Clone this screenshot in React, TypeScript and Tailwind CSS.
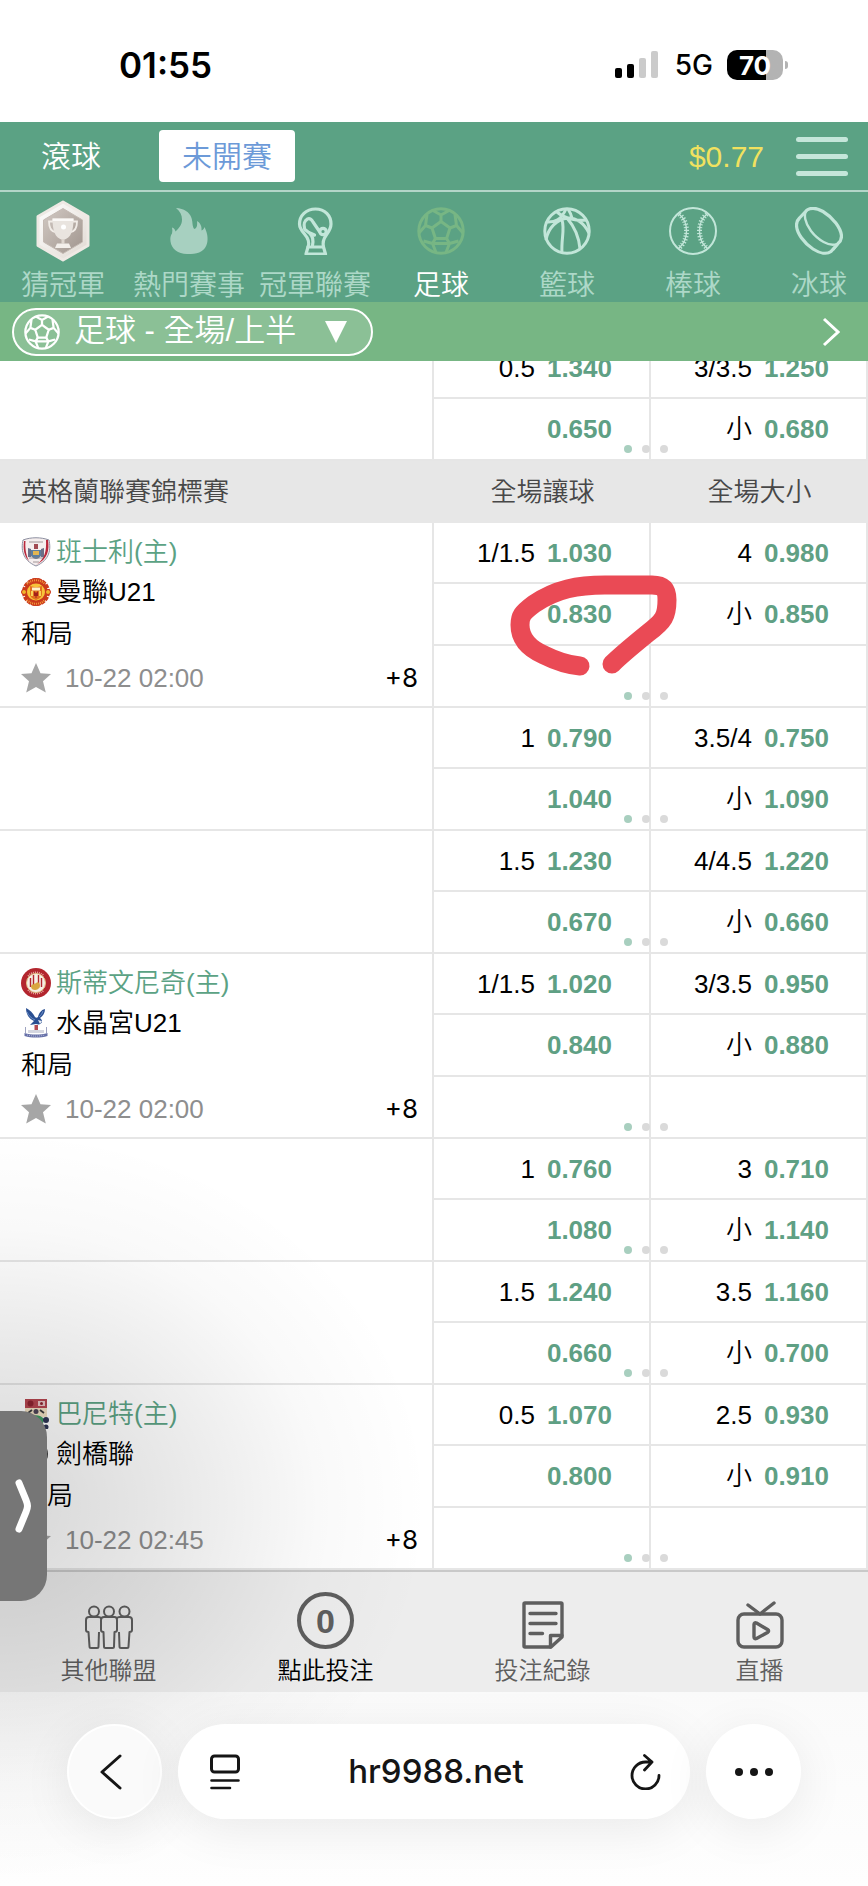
import React from 'react';
import clsx from 'clsx';

type IconProps = { className?: string };

const SoccerIcon: React.FC<IconProps> = ({ className }) => (
  <svg viewBox="0 0 48 48" fill="none" stroke="currentColor" strokeWidth="3" strokeLinejoin="round" className={className}>
    <circle cx="24" cy="24" r="22.2" />
    <path d="M24 14.5 33 21 29.6 31.5H18.4L15 21z" />
    <path d="M24 14.5V8M24 8l-8-4.500M24 8l8-4.500M15 21l-6.500-2.500M8.500 18.500 10 7.500M8.500 18.500 2 26M33 21l6.500-2.500M39.500 18.500 38 7.500M39.500 18.500 46 26M18.400 31.500 15.500 36.500M29.600 31.500l2.900 5M15.500 36.500h17M15.500 36.500 6.500 34M15.500 36.500 19 45.500M32.500 36.500l9-2.500M32.500 36.500 29 45.500" />
  </svg>
);

const ChampionBadge: React.FC<IconProps> = ({ className }) => (
  <svg viewBox="0 0 56 62" className={className}>
    <defs>
      <linearGradient id="badgeRim" x1="0" y1="0" x2="1" y2="1">
        <stop offset="0" stopColor="#ffffff" />
        <stop offset="1" stopColor="#e0d9d2" />
      </linearGradient>
      <linearGradient id="badgeCore" x1="0" y1="0" x2="1" y2="1">
        <stop offset="0" stopColor="#d2c9c3" />
        <stop offset="1" stopColor="#a0958e" />
      </linearGradient>
    </defs>
    <path d="M28 2 53 16.500V45.500L28 60 3 45.500V16.500z" fill="url(#badgeRim)" stroke="#eee9e4" strokeWidth="3" strokeLinejoin="round" />
    <path d="M28 8.500 47.500 20V42L28 53.500 8.500 42V20z" fill="url(#badgeCore)" stroke="#c4bab3" />
    <path d="M18.500 21.500h-4.500c0 6 2 10 6.500 10.500M37.500 21.500H42c0 6-2 10-6.500 10.500" fill="none" stroke="#f1ece7" strokeWidth="1.800" />
    <path d="M17.500 18.500h21c0 11-2 20-10.500 21.500C19.500 38.500 17.500 29.500 17.500 18.500z" fill="#e9e4df" />
    <path d="M17.500 18.500h21v2.500h-21z" fill="#fbf9f7" />
    <path d="M26.500 39h3v4.500h-3z" fill="#ddd5ce" />
    <path d="M22 43.500h12l2 4.500H20z" fill="#f3efeb" />
    <circle cx="28.500" cy="27" r="2.500" fill="#fff" />
  </svg>
);

const FlameIcon: React.FC<IconProps> = ({ className }) => (
  <svg viewBox="0 0 48 48" fill="currentColor" className={className}>
    <path d="M11 1c8 .500 13.500 4 15.500 10 1.500 4.500.500 9 3 11 2.500-1 3-4 2.500-8 3 1.500 5 5 4.500 9.500 1.500-.500 2.500-1.500 3-3.500 2.500 5 4 11 2.500 16.500C40.500 43 34 47 26 47h-4C13 47 6.500 42 5.500 34.500 5 31 5.500 28.500 7 26.500c.500-2 .500-4 0-6 2 .500 3 2 3.500 4C14 21 17 18 17 12.500 17 8 15 4 11 1z" />
  </svg>
);

const WorldCupIcon: React.FC<IconProps> = ({ className }) => (
  <svg viewBox="0 0 48 48" fill="none" stroke="currentColor" strokeWidth="3.2" strokeLinecap="round" strokeLinejoin="round" className={className}>
    <path d="M17 40c2-5 0-9-3.500-13C10 23 8.500 20.500 8.500 17 8.500 8.500 15 2 24.500 2S40 8.500 40 17c0 5-2.500 8-5 11.500-3 4-3.500 7-2.500 11.500" />
    <path d="M17 40h15.500l2 7H15z" />
    <path d="M13.500 21.500c-1-4 0-8 3-9.500 2.500-1 4 .500 5.500 3l6.500 9.500M14 22.500l5 4c3 3 3.500 7 2.500 12M19 26l4.500 2" />
    <circle cx="32" cy="24.500" r="3.2" />
  </svg>
);

const BasketballIcon: React.FC<IconProps> = ({ className }) => (
  <svg viewBox="0 0 48 48" fill="none" stroke="currentColor" strokeWidth="3" className={className}>
    <circle cx="24" cy="24" r="22.2" />
    <path d="M4 15c8 .500 14-2 19-13M14 5c8 7 20 9 29 8M3 33C5 21 14 12 25 11c8-.500 16 5 21 15M19 13c3 9-1 20 0 33M24 11c6 7 12 18 13 31M25 2c2 3 3 5 4 9" />
  </svg>
);

const BaseballIcon: React.FC<IconProps> = ({ className }) => (
  <svg viewBox="0 0 48 48" fill="none" stroke="currentColor" className={className}>
    <circle cx="24" cy="24" r="23" strokeWidth="2" />
    <path d="M10 7c5 4 7.500 10 7.500 17S15 37 10 41M38 7c-5 4-7.500 10-7.500 17S33 37 38 41" strokeWidth="1.400" />
    <path d="M10 7c5 4 7.500 10 7.500 17S15 37 10 41M38 7c-5 4-7.500 10-7.500 17S33 37 38 41" strokeWidth="5" strokeDasharray="1.200 1.800" />
  </svg>
);

const PuckIcon: React.FC<IconProps> = ({ className }) => (
  <svg viewBox="0 0 48 48" fill="none" stroke="currentColor" strokeWidth="3.2" strokeLinejoin="round" className={className}>
    <path d="M12 3c4-2.500 10-2 16 1.500C38 10.500 46 21 46.500 29c0 3-1 5.500-3.500 7.500l-7 8c-4 3-11 2-18-2.500C9 36 1.500 26 1.500 18c0-3 1-5 3-7z" />
    <path d="M12 3c-4 4-2 13 4 21 7 9 18 16 26 13" strokeWidth="2.400" />
    <path d="M38 43l5-6" strokeWidth="2.400" />
  </svg>
);

const StarIcon: React.FC<IconProps> = ({ className }) => (
  <svg viewBox="0 0 30 30" fill="#a6a6a6" className={className}>
    <path d="M15 0l4.500 10.300 10.500.800-8 7.200L24.800 29.500 15 24l-9.800 5.500L8 18.300 0 11.100l10.500-.800z" />
  </svg>
);

const BarnsleyCrest = () => (
  <svg viewBox="0 0 30 30" className="size-[30px] shrink-0">
    <path d="M2 3c8-3 18-3 26 0 2 9 1 20-13 26C1 23 0 12 2 3z" fill="#f5eeee" stroke="#8d8fa0" />
    <path d="M27 3c1.500 10 0 19-12 25 9-6 10.500-14 10-25zM3 4C2 12 3 19 8 24 4.500 17 4 10 4.500 4z" fill="#b8283c" />
    <path d="M7 11l3 1v8H7zM20 12l3-1v9h-3z" fill="#6b6f86" />
    <path d="M10 13h10v6c-2 2-3 3-5 3s-3-1-5-3z" fill="#5d7d9e" />
    <path d="M12 14h6v4h-6z" fill="#e3b552" />
    <path d="M13 7h4v5h-4z" fill="#a24a52" />
    <path d="M8 5h14M8 21h14M12 25h6" stroke="#8a7d80" strokeWidth=".8" />
  </svg>
);

const UnitedCrest = () => (
  <svg viewBox="0 0 30 30" className="size-[30px] shrink-0">
    <ellipse cx="15" cy="15" rx="11.500" ry="14" fill="#cb3a1c" />
    <circle cx="15" cy="15" r="12.500" fill="none" stroke="#cb3a1c" strokeWidth="3" strokeDasharray="4 1" />
    <circle cx="3" cy="15" r="2.500" fill="#f0b52c" stroke="#c9301c" />
    <circle cx="27" cy="15" r="2.500" fill="#f0b52c" stroke="#c9301c" />
    <path d="M6 7c5-5 13-5 18 0M6 23c5 5 13 5 18 0" fill="none" stroke="#f29a3a" strokeWidth="2" strokeDasharray="1 1" />
    <ellipse cx="15" cy="15" rx="9" ry="8.500" fill="#f7c33a" />
    <path d="M9 9c4 1.500 8 1.500 12 0v8c0 3-3 5-6 6-3-1-6-3-6-6z" fill="#e2701f" />
    <path d="M11 10.500h8v3h-8z" fill="#fff3c9" />
    <path d="M13 14l2 2 2-2v5h-1.500v2h-1v-2H13z" fill="#a3201a" />
    <path d="M10 14h2v5h-2zM18 14h2v5h-2z" fill="#f7d35a" />
  </svg>
);

const StevenageCrest = () => (
  <svg viewBox="0 0 30 30" className="size-[30px] shrink-0">
    <circle cx="15" cy="15" r="15" fill="#b3262e" />
    <path d="M7 8c4-5 12-5 16 0M7 22c4 5 12 5 16 0" fill="none" stroke="#e6a7a2" strokeWidth="1.600" strokeDasharray="1 1" />
    <circle cx="15" cy="15" r="9.500" fill="#f6efe6" stroke="#e2c389" />
    <path d="M9.500 10v9M12.500 7v13M17.500 7v13M20.500 10v9" stroke="#b3262e" strokeWidth="1.400" />
    <path d="M10 18c2-3 3-1 5-3s4 0 4 3c-1 3-3 4-5 4s-4-1-4-4z" fill="#d9a640" />
  </svg>
);

const PalaceCrest = () => (
  <svg viewBox="0 0 30 30" className="size-[30px] shrink-0">
    <path d="M5 0c0 6 3 11 8 13l-4 4 6-1c3 1 6 0 6-3 0-1-1-2-2-3 3-2 5-5 5-9-4 1-6 4-7 8-1 1-2 1-3 0C12 5 9 2 5 0z" fill="#2a4f92" />
    <path d="M6 4c2 4 4 6 8 8M22 3c-1 3-2 4-4 6" fill="none" stroke="#7e9fd2" strokeWidth=".8" />
    <path d="M17 12l4 1-2 3z" fill="#e9eef5" />
    <path d="M13.500 17h3.500v8h-3.500z" fill="#b44a52" />
    <path d="M7 22h16v3H7z" fill="#d4d6e0" />
    <path d="M4.500 19v6M25.500 19v6" stroke="#9ea3c0" />
    <path d="M3.500 25c7 2 16 2 23 0v3c-7 2-16 2-23 0z" fill="#6670a8" />
    <path d="M6 27c6 1.500 12 1.500 18 0" fill="none" stroke="#c9cce2" strokeWidth=".8" strokeDasharray="1 1" />
  </svg>
);

const BarnetCrest = () => (
  <svg viewBox="0 0 30 30" className="size-[30px] shrink-0">
    <path d="M4 0h22v18H4z" fill="#efdfc2" />
    <path d="M4 0h22v9H4z" fill="#b54650" />
    <circle cx="9.500" cy="4.500" r="3" fill="#8d2430" />
    <path d="M17 2h7v5h-7z" fill="#e6c3c3" />
    <circle cx="20.500" cy="4.500" r="1.500" fill="#8d2430" />
    <path d="M7 14l4-3M19 11l4 3" stroke="#3a3a3a" strokeWidth="1.800" />
    <circle cx="15" cy="12.500" r="2.500" fill="#4d4457" />
    <path d="M8 18c6-3 12-2 15 2l-2 9H10z" fill="#3f9b62" />
    <circle cx="25" cy="21" r="3" fill="#2d3354" />
    <circle cx="25" cy="28" r="2.500" fill="#2d3354" />
  </svg>
);

const CambridgeCrest = () => (
  <svg viewBox="0 0 30 30" className="size-[30px] shrink-0">
    <circle cx="14" cy="15" r="13" fill="#3a3a3a" />
    <circle cx="14" cy="15" r="9" fill="#f2b63c" />
  </svg>
);

const sports = [
  { label: '猜冠軍', icon: <ChampionBadge className="h-[62px] w-14" /> },
  { label: '熱門賽事', icon: <FlameIcon className="size-12 text-[#a7d0c0]" /> },
  { label: '冠軍聯賽', icon: <WorldCupIcon className="size-12" /> },
  { label: '足球', icon: <SoccerIcon className="size-12 text-[#77b684]" />, active: true },
  { label: '籃球', icon: <BasketballIcon className="size-12" /> },
  { label: '棒球', icon: <BaseballIcon className="size-12" /> },
  { label: '冰球', icon: <PuckIcon className="size-12" /> },
];

type Odd = { line?: string; price?: string };
type Match = { home: string; away: string; time: string; homeCrest: React.ReactNode; awayCrest: React.ReactNode };
type Block = { match?: Match; rows: [Odd, Odd][]; marked?: boolean };

const previous: Block[] = [
  {
    rows: [
      [{ line: '0.5', price: '1.340' }, { line: '3/3.5', price: '1.250' }],
      [{ price: '0.650' }, { line: '小', price: '0.680' }],
    ],
  },
];

const league: Block[] = [
  {
    match: { home: '班士利(主)', away: '曼聯U21', time: '10-22 02:00', homeCrest: <BarnsleyCrest />, awayCrest: <UnitedCrest /> },
    marked: true,
    rows: [
      [{ line: '1/1.5', price: '1.030' }, { line: '4', price: '0.980' }],
      [{ price: '0.830' }, { line: '小', price: '0.850' }],
      [{}, {}],
    ],
  },
  {
    rows: [
      [{ line: '1', price: '0.790' }, { line: '3.5/4', price: '0.750' }],
      [{ price: '1.040' }, { line: '小', price: '1.090' }],
    ],
  },
  {
    rows: [
      [{ line: '1.5', price: '1.230' }, { line: '4/4.5', price: '1.220' }],
      [{ price: '0.670' }, { line: '小', price: '0.660' }],
    ],
  },
  {
    match: { home: '斯蒂文尼奇(主)', away: '水晶宮U21', time: '10-22 02:00', homeCrest: <StevenageCrest />, awayCrest: <PalaceCrest /> },
    rows: [
      [{ line: '1/1.5', price: '1.020' }, { line: '3/3.5', price: '0.950' }],
      [{ price: '0.840' }, { line: '小', price: '0.880' }],
      [{}, {}],
    ],
  },
  {
    rows: [
      [{ line: '1', price: '0.760' }, { line: '3', price: '0.710' }],
      [{ price: '1.080' }, { line: '小', price: '1.140' }],
    ],
  },
  {
    rows: [
      [{ line: '1.5', price: '1.240' }, { line: '3.5', price: '1.160' }],
      [{ price: '0.660' }, { line: '小', price: '0.700' }],
    ],
  },
  {
    match: { home: '巴尼特(主)', away: '劍橋聯', time: '10-22 02:45', homeCrest: <BarnetCrest />, awayCrest: <CambridgeCrest /> },
    rows: [
      [{ line: '0.5', price: '1.070' }, { line: '2.5', price: '0.930' }],
      [{ price: '0.800' }, { line: '小', price: '0.910' }],
      [{}, {}],
    ],
  },
];

const MatchInfo: React.FC<{ match: Match }> = ({ match }) => (
  <div className="pt-[9px] pr-[14px] pl-[21px] font-[350] text-black">
    <div className="flex h-10 items-center gap-[5px] text-[#5ba284]">
      {match.homeCrest}
      {match.home}
    </div>
    <div className="flex h-10 items-center gap-[5px]">
      {match.awayCrest}
      {match.away}
    </div>
    <div className="flex h-11 items-center">和局</div>
    <div className="flex h-11 items-center gap-[14px]">
      <button type="button" aria-label="收藏">
        <StarIcon className="size-[30px]" />
      </button>
      <span className="text-[#8e8e8e]">{match.time}</span>
      <a href="#more" className="ml-auto font-['Inter',sans-serif] font-normal">+8</a>
    </div>
  </div>
);

const PagerDots = () => (
  <div className="absolute bottom-[6px] left-[190px] z-10 flex gap-[10px]">
    <i className="size-2 rounded-full bg-[#a8cfbf]" />
    <i className="size-2 rounded-full bg-[#dadada]" />
    <i className="size-2 rounded-full bg-[#dadada]" />
  </div>
);

// Hand drawn marker round the picked price
const Marker = () => (
  <svg viewBox="0 0 180 112" fill="none" className="pointer-events-none absolute -top-[14px] left-[66px] z-20 h-28 w-[180px]">
    <path
      d="M80 96C68 95 56 91 44 85 28 78 20 68 20 55 20 46 22 43 34 34 56 19 78 15 105 15H152C164 15 167 20 167 30 167 46 164 51 148 63 132 76 120 86 112 94"
      stroke="#ea4a55"
      strokeWidth="19"
      strokeLinecap="round"
      strokeLinejoin="round"
    />
  </svg>
);

const OddCell: React.FC<{ odd: Odd; children?: React.ReactNode }> = ({ odd, children }) => (
  <td className="relative border-r-2 border-b-2 border-[#e6e6e6] p-0">
    <div className="flex items-center justify-end gap-3 pr-[37px]">
      <span className="font-[350] text-black">{odd.line}</span>
      {odd.price && (
        <button type="button" className="font-bold text-[#5fa084]">{odd.price}</button>
      )}
    </div>
    {children}
  </td>
);

const OddsRows: React.FC<{ blocks: Block[] }> = ({ blocks }) => (
  <tbody>
    {blocks.map((block, b) =>
      block.rows.map((row, r) => (
        <tr key={`${b}-${r}`} className={r === 0 ? 'h-[61px]' : 'h-[62px]'}>
          {r === 0 && (
            <td rowSpan={block.rows.length} className="border-r-2 border-b-2 border-[#e6e6e6] p-0 align-top">
              {block.match && <MatchInfo match={block.match} />}
            </td>
          )}
          <OddCell odd={row[0]}>
            {r === block.rows.length - 1 && <PagerDots />}
            {block.marked && r === 1 && <Marker />}
          </OddCell>
          <OddCell odd={row[1]} />
        </tr>
      )),
    )}
  </tbody>
);

const StatusBar = () => (
  <div className="flex h-[122px] items-center bg-white pt-2 pr-20 pl-[119px] font-['Inter',sans-serif] text-black">
    <span className="text-[35px] font-semibold">01:55</span>
    <svg viewBox="0 0 44 28" className="ml-auto h-7 w-11">
      <rect x="0" y="17" width="7" height="10" rx="2" />
      <rect x="12" y="13" width="7" height="14" rx="2" />
      <rect x="24" y="7" width="7" height="20" rx="2" fill="#cbcbcb" />
      <rect x="36" y="0" width="7" height="27" rx="2" fill="#cbcbcb" />
    </svg>
    <span className="ml-4 text-[28px] font-medium">5G</span>
    <div className="ml-[14px] flex items-center gap-[2px]">
      <div className="flex h-[30px] w-14 items-center justify-center rounded-[10px] bg-linear-to-r from-black from-70% to-[#b3b3b3] to-70% text-[26px] font-bold text-white">
        70
      </div>
      <div className="h-2 w-[3px] rounded-r-full bg-[#b3b3b3]" />
    </div>
  </div>
);

const Header = () => (
  <header className="relative z-10 text-white">
    <div className="flex h-[70px] items-center border-b-2 border-[#b3d5c8] bg-[#5ba284] pr-5 pl-[41px] text-[30px]">
      <button type="button" className="font-[350]">滾球</button>
      <button type="button" className="ml-[58px] h-[52px] w-[136px] rounded bg-white font-[350] text-[#6c9ad8]">
        未開賽
      </button>
      <span className="ml-auto text-[#f1e15f]">$0.77</span>
      <button type="button" aria-label="選單" className="ml-8 flex w-[52px] flex-col gap-3">
        <i className="h-[5px] rounded-full bg-[#c5e6da]" />
        <i className="h-[5px] rounded-full bg-[#c5e6da]" />
        <i className="h-[5px] rounded-full bg-[#c5e6da]" />
      </button>
    </div>
    <nav className="flex h-[110px] overflow-hidden bg-[#5ba284]">
      {sports.map((sport) => (
        <a
          key={sport.label}
          href="#sport"
          className={clsx('flex w-[126px] shrink-0 flex-col items-center', sport.active ? 'text-white' : 'text-[#c2e6d9]')}
        >
          <span className="flex h-20 items-center">{sport.icon}</span>
          <span className={clsx('text-[28px] leading-8 font-[350] whitespace-nowrap', !sport.active && 'opacity-80')}>
            {sport.label}
          </span>
        </a>
      ))}
    </nav>
    <div className="flex h-[59px] items-center justify-between bg-[#77b684] pr-7 pl-3">
      <button type="button" className="flex h-12 w-[361px] items-center rounded-full border-2 border-white bg-white/15 pl-[10px] text-[31px] font-[350]">
        <SoccerIcon className="size-9" />
        <span className="ml-[14px]">足球 - 全場/上半</span>
        <svg viewBox="0 0 22 22" fill="currentColor" className="mr-6 ml-auto size-[22px]">
          <path d="M0 0h22L11 22z" />
        </svg>
      </button>
      <button type="button" aria-label="下一個">
        <svg viewBox="0 0 18 30" fill="none" stroke="currentColor" strokeWidth="3" className="h-[30px] w-[18px]">
          <path d="M2 2l14 13L2 28" />
        </svg>
      </button>
    </div>
  </header>
);

const PeopleIcon = () => (
  <svg viewBox="0 0 48 44" fill="none" stroke="currentColor" strokeWidth="2" strokeLinejoin="round" className="h-11 w-12">
    <circle cx="9" cy="6.500" r="5" />
    <circle cx="24" cy="6.500" r="5" />
    <circle cx="39.500" cy="6.500" r="5" />
    <path d="M16 14c0-2-1-2-3-2H4c-2 0-3 1-3 3v10c0 1.500 1 2 2.500 2l1 14.500c0 1 .500 1.500 1.500 1.500h6c1 0 1.500-.500 1.500-1.500l.500-14.500" />
    <path d="M19 12h10.500c2 0 2.500 1 2.500 3v10c0 1.500-1 2-2.500 2L29 41.500c0 1-.500 1.500-1.500 1.500h-7c-1 0-1.500-.500-1.500-1.500L18.500 27c-1.500 0-2.500-.500-2.500-2V15c0-2 1-3 3-3z" />
    <path d="M32 14c0-2 1-2 3-2h9c2 0 3 1 3 3v10c0 1.500-1 2-2.500 2l-1 14.500c0 1-.500 1.500-1.500 1.500h-6c-1 0-1.500-.500-1.500-1.500L34 27" />
  </svg>
);

const RecordIcon = () => (
  <svg viewBox="0 0 42 48" fill="none" stroke="currentColor" strokeWidth="3.400" strokeLinecap="round" strokeLinejoin="round" className="h-12 w-[42px]">
    <path d="M3 2h36c.500 0 1 .500 1 1v33L29 46H3c-.500 0-1-.500-1-1V3c0-.500.500-1 1-1z" />
    <path d="M28.500 46V34.500H40M8 12.500h26M8 22.500h26M8 32.500h12.500" />
  </svg>
);

const LiveIcon = () => (
  <svg viewBox="0 0 48 48" fill="none" stroke="currentColor" strokeWidth="3.400" strokeLinecap="round" strokeLinejoin="round" className="size-12">
    <rect x="2" y="13" width="44" height="33" rx="6" />
    <path d="M12 4l12 9L38 2M18 23.500c0-1.500 1-2 2.500-1.500l11 6.500c1.500 1 1.500 2 0 3l-11 6c-1.500.500-2.500 0-2.500-1.500z" />
  </svg>
);

const tabs = [
  { label: '其他聯盟', icon: <PeopleIcon /> },
  { label: '點此投注', icon: <span className="flex size-[57px] items-center justify-center rounded-full border-4 border-[#5e5e5e] text-[34px] font-bold">0</span>, active: true },
  { label: '投注紀錄', icon: <RecordIcon /> },
  { label: '直播', icon: <LiveIcon /> },
];

const TabBar = () => (
  <nav className="grid h-[122px] grid-cols-4 border-t-2 border-[#c9c9c9] bg-[#ededed]">
    {tabs.map((tab) => (
      <a key={tab.label} href="#tab" className="flex flex-col items-center pt-5 text-2xl leading-8 text-[#5e5e5e]">
        <span className="flex h-[57px] items-end">{tab.icon}</span>
        <span className={clsx('mt-[6px] font-[350]', tab.active && 'text-black')}>{tab.label}</span>
      </a>
    ))}
  </nav>
);

const BrowserBar = () => (
  <footer className="flex items-start justify-center gap-4 bg-linear-to-b from-[#fafafa] to-[#fefefe] pt-8 pb-[67px] text-[#151515]">
    <button type="button" aria-label="返回" className="relative z-30 flex size-[95px] items-center justify-center rounded-full border-2 border-white bg-[#fafafa] shadow-[0_10px_50px_rgba(0,0,0,0.08)]">
      <svg viewBox="0 0 22 36" fill="none" stroke="currentColor" strokeWidth="3" strokeLinecap="round" strokeLinejoin="round" className="mr-2 h-9 w-[22px]">
        <path d="M20 2L2 18l18 16" />
      </svg>
    </button>
    <div className="relative z-30 flex h-[95px] w-[512px] items-center justify-between rounded-full bg-white px-[29px] shadow-[0_10px_50px_rgba(0,0,0,0.08)]">
      <button type="button" aria-label="頁面選單">
        <svg viewBox="0 0 36 36" fill="none" stroke="currentColor" strokeWidth="3" strokeLinecap="round" className="size-9">
          <rect x="4.500" y="2" width="27" height="16" rx="3" />
          <path d="M4.500 26.500h27M4.500 34h18.500" strokeWidth="2.600" />
        </svg>
      </button>
      <span className="font-['Inter',sans-serif] text-[33px] font-medium">hr9988.net</span>
      <button type="button" aria-label="重新整理">
        <svg viewBox="0 0 32 36" fill="none" stroke="currentColor" strokeWidth="2.800" strokeLinecap="round" strokeLinejoin="round" className="h-9 w-8">
          <path d="M30 21.500A13.500 13.500 0 1 1 16.500 8H23M15.500 1.500l7.500 6.500-7.500 8" />
        </svg>
      </button>
    </div>
    <button type="button" aria-label="更多" className="relative z-30 flex size-[95px] items-center justify-center gap-[7px] rounded-full bg-white shadow-[0_10px_50px_rgba(0,0,0,0.08)]">
      <i className="size-2 rounded-full bg-current" />
      <i className="size-2 rounded-full bg-current" />
      <i className="size-2 rounded-full bg-current" />
    </button>
  </footer>
);

// Drawer handle parked on the left edge of the screen, with its soft shade
const SideHandle = () => (
  <>
    <div className="pointer-events-none absolute bottom-0 left-0 z-20 h-[760px] w-[434px] bg-[radial-gradient(ellipse_at_0%_50%,rgba(0,0,0,0.16),rgba(0,0,0,0.09)_28%,rgba(0,0,0,0.025)_52%,transparent_70%)]" />
    <button type="button" aria-label="展開" className="absolute bottom-[285px] left-0 z-30 flex h-[190px] w-[47px] items-center rounded-r-[26px] bg-[#767676] pl-[14px] text-white">
      <svg viewBox="0 0 20 54" fill="none" stroke="currentColor" strokeWidth="7" strokeLinecap="round" strokeLinejoin="round" className="h-[54px] w-5">
        <path d="M5 4l7 17c2 5 2 7 0 12L5 50" />
      </svg>
    </button>
  </>
);

const App: React.FC = () => (
  <div className="relative overflow-hidden bg-white font-['Liberation_Sans','Noto_Sans_CJK_TC',sans-serif]">
    <StatusBar />
    <Header />
    <main className="overflow-hidden">
      <table className="-mt-[23px] w-full table-fixed border-separate border-spacing-0 text-[26px] leading-8">
        <colgroup>
          <col className="w-1/2" />
          <col className="w-1/4" />
          <col className="w-1/4" />
        </colgroup>
        <OddsRows blocks={previous} />
        <thead className="table-row-group">
          <tr className="h-[62px] bg-[#e7e7e7] text-[#484848]">
            <th className="p-0 pl-[21px] text-left font-[350]">英格蘭聯賽錦標賽</th>
            <th className="p-0 text-center font-[350]">全場讓球</th>
            <th className="p-0 text-center font-[350]">全場大小</th>
          </tr>
        </thead>
        <OddsRows blocks={league} />
      </table>
    </main>
    <TabBar />
    <BrowserBar />
    <SideHandle />
  </div>
);

export default App;
